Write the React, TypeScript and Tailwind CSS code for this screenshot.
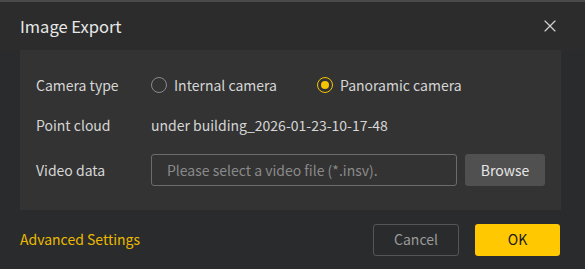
import { X } from 'lucide-react';

const FONT = '"Noto Sans CJK SC", "Noto Sans", sans-serif';

function Radio({ checked, label }: { checked?: boolean; label: string }) {
  return (
    <label className="flex items-center gap-[7px]">
      <span
        className={
          'flex h-[16px] w-[16px] items-center justify-center rounded-full border-[1.5px] ' +
          (checked ? 'border-[#f5c400]' : 'border-[#8a8a8a]')
        }
      >
        {checked && <span className="h-[8px] w-[8px] rounded-full bg-[#f5c400]" />}
      </span>
      <span className="text-[14px] text-[#d6d6d6]">{label}</span>
    </label>
  );
}

export default function App() {
  return (
    <div className="flex h-[269px] w-[585px] flex-col bg-[#2a2b2d]" style={{ fontFamily: FONT }}>
      <div className="h-[2px] bg-[#4a4a4a]" />
      <div className="flex h-[48px] items-center justify-between bg-[#2c2c2c] pl-5 pr-[25px]">
        <h1 className="text-[16.5px] text-[#e8e8e8]">Image Export</h1>
        <X size={20} strokeWidth={1.4} className="text-[#d0d0d0]" />
      </div>

      <div className="pl-5 pr-[24px]">
        <div className="flex h-[160px] flex-col bg-[#333333] pl-4 pt-5">
          <div className="flex h-[30px] items-center">
            <span className="w-[115px] text-[14px] text-[#d6d6d6]">Camera type</span>
            <div className="flex items-center gap-[40px]">
              <Radio label="Internal camera" />
              <Radio checked label="Panoramic camera" />
            </div>
          </div>
          <div className="mt-[10px] flex h-[30px] items-center">
            <span className="w-[115px] text-[14px] text-[#d6d6d6]">Point cloud</span>
            <span className="text-[14px] text-[#d6d6d6]">under building_2026-01-23-10-17-48</span>
          </div>
          <div className="mt-[14px] flex h-[32px] items-center">
            <span className="w-[115px] text-[14px] text-[#d6d6d6]">Video data</span>
            <div className="flex h-[32px] w-[306px] items-center rounded-[3px] border border-[#6c6c6c] px-[15px] text-[14px] text-[#8a8a8a]">
              Please select a video file (*.insv).
            </div>
            <button className="ml-2 flex h-[32px] w-[80px] items-center justify-center rounded-[3px] bg-[#505050] text-[14px] text-[#e6e6e6]">
              Browse
            </button>
          </div>
        </div>
      </div>

      <div className="flex flex-1 items-center justify-between pl-5 pr-[25px]">
        <span className="text-[14px] text-[#ebba00]">Advanced Settings</span>
        <div className="flex items-center gap-4">
          <button className="flex h-[32px] w-[86px] items-center justify-center rounded-[3px] border border-[#555] text-[14px] text-[#9a9a9a]">
            Cancel
          </button>
          <button className="flex h-[32px] w-[85px] items-center justify-center rounded-[3px] bg-[#ffc800] text-[14px] text-[#1a1a1a]">
            OK
          </button>
        </div>
      </div>
    </div>
  );
}
